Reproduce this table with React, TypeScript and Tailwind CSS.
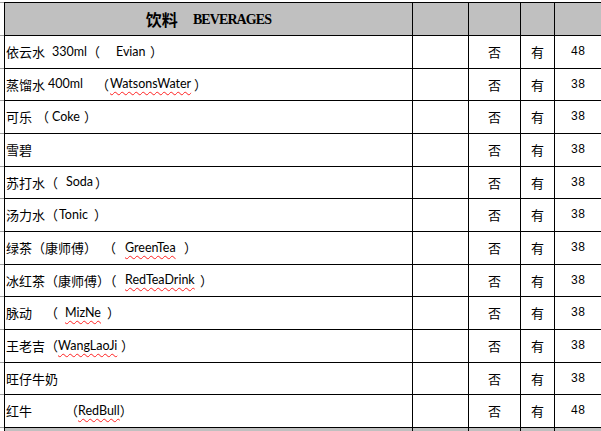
type Token = { t: string; w?: string; wavy?: boolean; latin?: boolean };

type Item = {
  tokens: Token[];
  price: string;
  h: string;
};

const items: Item[] = [
  {
    tokens: [
      { t: "依云水", w: "min-w-[46px]" },
      { t: "330ml", w: "min-w-[32px]", latin: true },
      { t: "（", w: "min-w-[29px]" },
      { t: "Evian", w: "min-w-[34px]", latin: true },
      { t: "）" },
    ],
    price: "48",
    h: "h-[33px]",
  },
  {
    tokens: [
      { t: "蒸馏水", w: "min-w-[42px]" },
      { t: "400ml", w: "min-w-[48px]", latin: true },
      { t: "（", w: "min-w-[14px]" },
      { t: "WatsonsWater", w: "min-w-[84px]", latin: true, wavy: true },
      { t: "）" },
    ],
    price: "38",
    h: "h-[32px]",
  },
  {
    tokens: [
      { t: "可乐", w: "min-w-[30px]" },
      { t: "（", w: "min-w-[16px]" },
      { t: "Coke", w: "min-w-[32px]", latin: true },
      { t: "）" },
    ],
    price: "38",
    h: "h-[33px]",
  },
  { tokens: [{ t: "雪碧" }], price: "38", h: "h-[33px]" },
  {
    tokens: [
      { t: "苏打水", w: "min-w-[38px]" },
      { t: "（", w: "min-w-[21px]" },
      { t: "Soda", w: "min-w-[29px]", latin: true },
      { t: "）" },
    ],
    price: "38",
    h: "h-[32px]",
  },
  {
    tokens: [
      { t: "汤力水", w: "min-w-[38px]" },
      { t: "（", w: "min-w-[14px]" },
      { t: "Tonic", w: "min-w-[35px]", latin: true },
      { t: "）" },
    ],
    price: "38",
    h: "h-[33px]",
  },
  {
    tokens: [
      { t: "绿茶（康师傅）", w: "min-w-[97px]" },
      { t: "（", w: "min-w-[22px]" },
      { t: "GreenTea", w: "min-w-[59px]", latin: true, wavy: true },
      { t: "）" },
    ],
    price: "38",
    h: "h-[33px]",
  },
  {
    tokens: [
      { t: "冰红茶（康师傅）（", w: "min-w-[119px]" },
      { t: "RedTeaDrink", w: "min-w-[75px]", latin: true, wavy: true },
      { t: "）" },
    ],
    price: "38",
    h: "h-[32px]",
  },
  {
    tokens: [
      { t: "脉动", w: "min-w-[39px]" },
      { t: "（", w: "min-w-[20px]" },
      { t: "MizNe", w: "min-w-[42px]", latin: true, wavy: true },
      { t: "）" },
    ],
    price: "38",
    h: "h-[33px]",
  },
  {
    tokens: [
      { t: "王老吉（", w: "min-w-[52px]" },
      { t: "WangLaoJi", w: "min-w-[63px]", latin: true, wavy: true },
      { t: "）" },
    ],
    price: "38",
    h: "h-[33px]",
  },
  { tokens: [{ t: "旺仔牛奶" }], price: "38", h: "h-[32px]" },
  {
    tokens: [
      { t: "红牛", w: "min-w-[59px]" },
      { t: "（", w: "min-w-[13px]" },
      { t: "RedBull", w: "min-w-[41px]", latin: true, wavy: true },
      { t: "）" },
    ],
    price: "48",
    h: "h-[33px]",
  },
];

const cjk = "font-['Noto_Sans_CJK_SC',sans-serif]";

function Gutter() {
  return <div className="w-[4px] shrink-0 border-b border-dashed border-[#a0a0a0]" />;
}

export default function App() {
  return (
    <div className="w-[601px] h-[431px] overflow-hidden bg-white text-black">
      {/* top edge */}
      <div className="flex h-[3px]">
        <Gutter />
        <div className="flex-1 border-b border-black" />
      </div>

      {/* header */}
      <div className="flex h-[33px]">
        <Gutter />
        <div className="flex flex-1 border-l border-b border-black bg-[#c0c0c0]">
          <div className="w-[408px] border-r border-black flex items-center justify-center gap-[15px]">
            <span className={`${cjk} text-[16px] font-bold`}>饮料</span>
            <span className="font-['Liberation_Serif',serif] text-[14px] font-bold tracking-[-0.9px]">
              BEVERAGES
            </span>
          </div>
          <div className="w-[56px] border-r border-black" />
          <div className="w-[52px] border-r border-black" />
          <div className="w-[34px] border-r border-black" />
          <div className="flex-1" />
        </div>
      </div>

      {items.map((it, i) => (
        <div key={i} className={`flex ${it.h}`}>
          <Gutter />
          <div className="flex flex-1 border-l border-b border-black">
            <div className="w-[408px] border-r border-black flex items-center pl-[1px] whitespace-nowrap">
              {it.tokens.map((tk, j) => (
                <span
                  key={j}
                  className={[
                    "inline-block shrink-0",
                    tk.w ?? "",
                    tk.latin
                      ? "font-['Lato','Liberation_Sans',sans-serif] text-[12.5px]"
                      : `${cjk} text-[13px]`,
                  ].join(" ")}
                >
                  <span
                    className={
                      tk.wavy
                        ? "underline decoration-wavy decoration-[#ff2020] decoration-1 underline-offset-[3px]"
                        : ""
                    }
                  >
                    {tk.t}
                  </span>
                </span>
              ))}
            </div>
            <div className="w-[56px] border-r border-black" />
            <div className={`w-[52px] border-r border-black flex items-center justify-center ${cjk} text-[13px]`}>
              否
            </div>
            <div className={`w-[34px] border-r border-black flex items-center justify-center ${cjk} text-[13px]`}>
              有
            </div>
            <div className="flex-1 flex items-center justify-center font-['Liberation_Mono',monospace] text-[12px]">
              {it.price}
            </div>
          </div>
        </div>
      ))}

      {/* next section starts */}
      <div className="flex h-[10px]">
        <div className="w-[4px] shrink-0" />
        <div className="flex flex-1 border-l border-black bg-[#c0c0c0]">
          <div className="w-[408px] border-r border-black" />
          <div className="w-[56px] border-r border-black" />
          <div className="w-[52px] border-r border-black" />
          <div className="w-[34px] border-r border-black" />
          <div className="flex-1" />
        </div>
      </div>
    </div>
  );
}
